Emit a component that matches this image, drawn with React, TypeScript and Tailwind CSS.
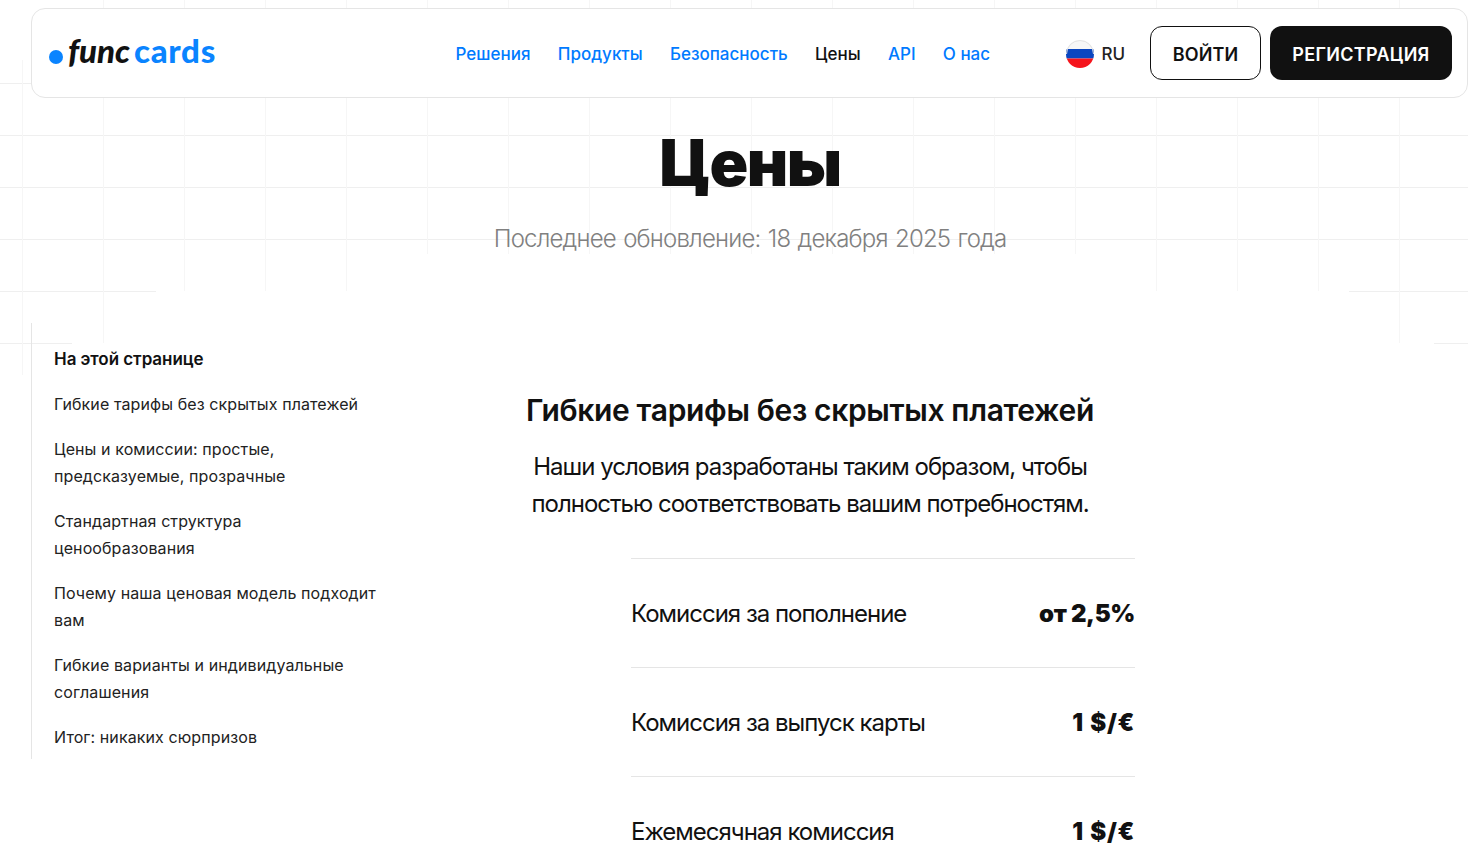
const navLinks = [
  { label: "Решения", active: false },
  { label: "Продукты", active: false },
  { label: "Безопасность", active: false },
  { label: "Цены", active: true },
  { label: "API", active: false },
  { label: "О нас", active: false },
];

const tocLinks = [
  "Гибкие тарифы без скрытых платежей",
  "Цены и комиссии: простые, предсказуемые, прозрачные",
  "Стандартная структура ценообразования",
  "Почему наша ценовая модель подходит вам",
  "Гибкие варианты и индивидуальные соглашения",
  "Итог: никаких сюрпризов",
];

const priceRows = [
  { label: "Комиссия за пополнение", value: "от 2,5%", valueClass: "tracking-[-0.35px]" },
  { label: "Комиссия за выпуск карты", value: "1 $/€", valueClass: "tracking-[0.7px] [word-spacing:1px]" },
  { label: "Ежемесячная комиссия", value: "1 $/€", valueClass: "tracking-[0.7px] [word-spacing:1px]" },
];

function RuFlag() {
  return (
    <svg width="28" height="28" viewBox="0 0 28 28" className="mt-[2px] shrink-0">
      <defs>
        <clipPath id="flag-circle">
          <circle cx="14" cy="14" r="14" />
        </clipPath>
      </defs>
      <g clipPath="url(#flag-circle)">
        <rect width="28" height="9" fill="#f7f7f7" />
        <rect y="9" width="28" height="9.5" fill="#0a46c0" />
        <rect y="18.5" width="28" height="9.5" fill="#f5141c" />
      </g>
      <path d="M0.5 14a13.5 13.5 0 0 1 27 0" fill="none" stroke="#e2e2e2" />
    </svg>
  );
}

function GridBackground() {
  return (
    <div className="absolute left-0 top-0 h-[375px] w-full overflow-hidden">
      <div className="absolute inset-0 bg-[linear-gradient(to_right,#f6f6f6_1px,transparent_1px),linear-gradient(to_bottom,#efefef_1px,transparent_1px)] bg-[size:81px_52px] bg-[position:22px_31px]" />
      {/* steps where the grid fades out */}
      <div className="absolute left-0 top-0 h-[60px] w-[31px] bg-white" />
      <div className="absolute left-[348px] right-[312px] top-[254px] h-[40px] bg-white" />
      <div className="absolute left-[156px] right-[119px] top-[291px] h-[90px] bg-white" />
      <div className="absolute left-[72px] right-[34px] top-[343px] h-[40px] bg-white" />
    </div>
  );
}

export default function App() {
  return (
    <div className="relative h-[854px] overflow-hidden bg-white font-['Inter',sans-serif] text-[#111111]">
      <GridBackground />

      <div className="relative pl-[31px] pt-2">
        <header className="flex h-[90px] items-center rounded-[14px] border border-[#e5e5e5] bg-white pl-[17px] pr-[15px]">
          <a className="flex w-[406.5px] items-center">
            <span className="mr-[5px] mt-[7px] h-[14px] w-[14px] rounded-full bg-[#0a84ff]" />
            <span className="-mt-[5px] font-['Lato',sans-serif] text-[33px] font-black italic leading-none">
              func
            </span>
            <span className="-mt-[5px] ml-[4px] font-['Lato',sans-serif] text-[33px] font-black leading-none tracking-[0.7px] text-[#0a84ff]">
              cards
            </span>
          </a>

          <nav className="flex items-center gap-[27.3px] pt-[4px]">
            {navLinks.map((link) => (
              <a
                key={link.label}
                className={`text-[17px] font-medium ${link.active ? "text-[#111111]" : "text-[#007aff]"}`}
              >
                {link.label}
              </a>
            ))}
          </nav>

          <div className="ml-auto flex items-center">
            <div className="mr-[25px] flex items-center gap-[7px]">
              <RuFlag />
              <span className="pt-[3px] text-[17px] font-medium text-[#222222]">RU</span>
            </div>
            <button className="mr-[9px] h-[54px] w-[111px] rounded-xl border border-[#111111] bg-white pt-[3px] text-lg font-semibold tracking-[0.1px]">
              ВОЙТИ
            </button>
            <button className="h-[54px] w-[182px] rounded-xl bg-[#111111] pt-[3px] text-lg font-semibold tracking-[0.3px] text-white">
              РЕГИСТРАЦИЯ
            </button>
          </div>
        </header>
      </div>

      <div className="relative mt-[25px] flex flex-col items-center">
        <h1 className="pl-[32px] text-[64px] font-black leading-[80px] tracking-[-1.5px]">Цены</h1>
        <p className="mt-[20px] pl-[32px] text-2xl font-light tracking-[-0.8px] text-[#808080] [word-spacing:1.3px]">
          Последнее обновление: 18 декабря 2025 года
        </p>
      </div>

      <div className="relative mt-[68px] flex pl-[31px]">
        <aside className="w-[454px]">
          <ul className="flex h-[436px] flex-col gap-[18px] border-l border-[#e5e5e5] pl-[22px] pt-[23px] text-base leading-[27px] tracking-[0.1px] text-[#222222]">
            <li className="text-[17px] font-semibold tracking-[-0.05px] text-[#111111]">На этой странице</li>
            {tocLinks.map((item) => (
              <li key={item} className="w-[325px]">
                {item}
              </li>
            ))}
          </ul>
        </aside>

        <main className="flex w-[650px] flex-col items-center pt-[67px]">
          <h2 className="text-[30px] font-semibold leading-10 tracking-[-0.35px]">
            Гибкие тарифы без скрытых платежей
          </h2>
          <p className="mt-[18px] w-[600px] text-center text-2xl leading-[37px] tracking-[-1px]">
            Наши условия разработаны таким образом, чтобы полностью соответствовать вашим потребностям.
          </p>
          <div className="mt-[36px] w-[504px] self-end">
            {priceRows.map((row) => (
              <div
                key={row.label}
                className="flex h-[109px] items-center justify-between border-t border-[#e5e5e5] pt-[1px]"
              >
                <span className="text-2xl tracking-[-1px]">{row.label}</span>
                <span className={`text-2xl font-black ${row.valueClass}`}>{row.value}</span>
              </div>
            ))}
          </div>
        </main>
      </div>
    </div>
  );
}
